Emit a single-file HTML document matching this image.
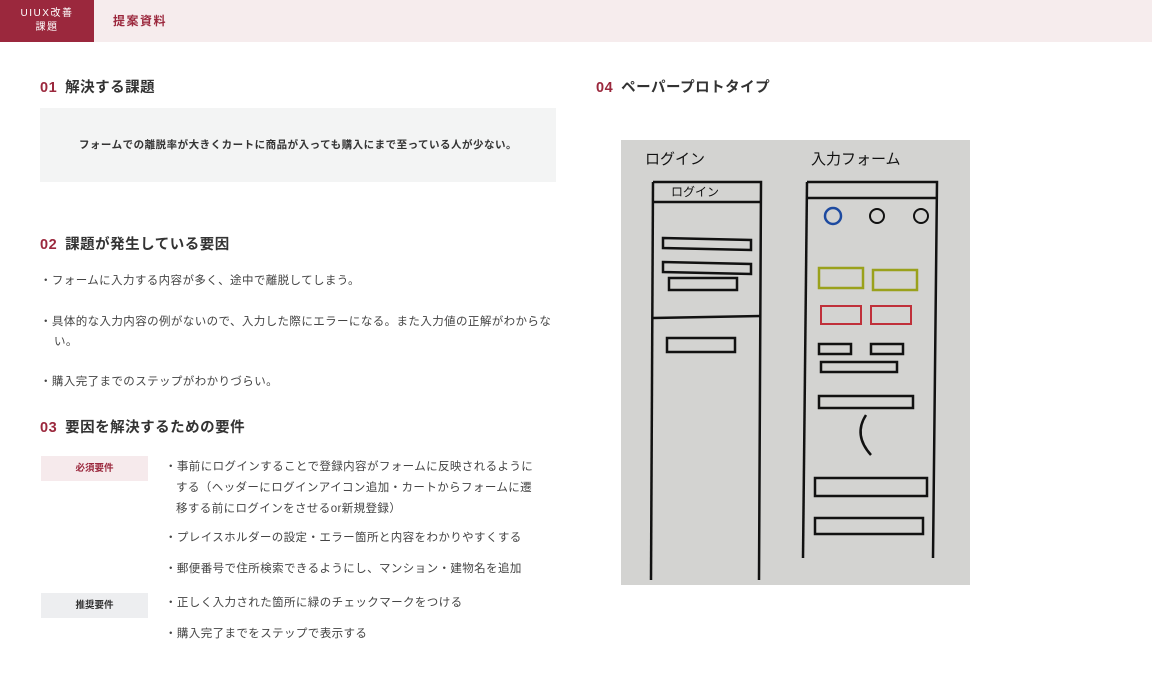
<!DOCTYPE html>
<html><head><meta charset="utf-8"><style>
*{margin:0;padding:0;box-sizing:border-box}
body{width:1152px;height:700px;background:#fff;font-family:"Liberation Sans","Noto Sans CJK JP",sans-serif;color:#333;position:relative;overflow:hidden}
.hd{position:absolute;left:0;top:0;width:1152px;height:42px;background:#f6eced}
.logo{position:absolute;left:0;top:0;width:94px;height:42px;background:#9b283d;color:#fff;font-size:10px;text-align:center;line-height:14px;padding-top:7px;letter-spacing:1.5px}
.ht{position:absolute;left:113px;top:12px;font-size:12px;color:#9b283d;letter-spacing:1.5px;font-weight:bold}
.h2{position:absolute;font-size:14.5px;font-weight:bold;color:#333;letter-spacing:.5px}
.h2 b{color:#9b283d;margin-right:8px}
.p{position:absolute;font-size:11.5px;color:#444;line-height:20px;letter-spacing:.4px}
.box{position:absolute;left:40px;top:108px;width:516px;height:74px;background:#f3f4f4;font-size:10.5px;font-weight:bold;text-align:center;line-height:74px;color:#333;letter-spacing:.5px}
.tag{position:absolute;left:41px;width:107px;height:25px;font-size:9.5px;font-weight:bold;text-align:center;line-height:25px}
</style></head><body>
<div class="hd"></div>
<div class="logo">UIUX改善<br>課題</div>
<div class="ht">提案資料</div>

<div class="h2" style="left:40px;top:76px"><b>01</b>解決する課題</div>
<div class="box">フォームでの離脱率が大きくカートに商品が入っても購入にまで至っている人が少ない。</div>

<div class="h2" style="left:40px;top:233px"><b>02</b>課題が発生している要因</div>
<div class="p" style="left:40px;top:271px">・フォームに入力する内容が多く、途中で離脱してしまう。</div>
<div class="p" style="left:40px;top:312px;width:515px;padding-left:14px;text-indent:-14px">・具体的な入力内容の例がないので、入力した際にエラーになる。また入力値の正解がわからない。</div>
<div class="p" style="left:40px;top:372px">・購入完了までのステップがわかりづらい。</div>

<div class="h2" style="left:40px;top:416px"><b>03</b>要因を解決するための要件</div>
<div class="tag" style="top:456px;background:#f6eaec;color:#9b283d">必須要件</div>
<div class="tag" style="top:593px;background:#edeef0;color:#333">推奨要件</div>
<div class="p" style="left:165px;top:457px;width:376px;padding-left:11px;text-indent:-11px;line-height:21px">・事前にログインすることで登録内容がフォームに反映されるようにする（ヘッダーにログインアイコン追加・カートからフォームに遷移する前にログインをさせるor新規登録）</div>
<div class="p" style="left:165px;top:528px">・プレイスホルダーの設定・エラー箇所と内容をわかりやすくする</div>
<div class="p" style="left:165px;top:559px">・郵便番号で住所検索できるようにし、マンション・建物名を追加</div>
<div class="p" style="left:165px;top:593px">・正しく入力された箇所に緑のチェックマークをつける</div>
<div class="p" style="left:165px;top:624px">・購入完了までをステップで表示する</div>

<div class="h2" style="left:596px;top:76px"><b>04</b>ペーパープロトタイプ</div>
<svg style="position:absolute;left:621px;top:140px" width="349" height="445" viewBox="0 0 349 445">
<rect width="349" height="445" fill="#d3d3d1"/>
<g fill="none" stroke="#111" stroke-width="2.5">
<path d="M32 42 L140 42 L138 440"/><path d="M32 42 L30 440"/>
<path d="M32 62 L140 62"/><path d="M32 178 L140 176"/>
<path d="M42 98 L130 100 L130 110 L42 108Z"/><path d="M42 122 L130 124 L130 134 L42 132Z"/>
<path d="M48 138 L116 138 L116 150 L48 150Z"/><path d="M46 198 L114 198 L114 212 L46 212Z"/>
<path d="M186 42 L316 42 L312 418"/><path d="M186 42 L182 418"/><path d="M186 58 L316 58"/>
<path d="M194 338 L306 338 L306 356 L194 356Z"/><path d="M194 378 L302 378 L302 394 L194 394Z"/>
<path d="M198 204 L230 204 L230 214 L198 214Z"/><path d="M250 204 L282 204 L282 214 L250 214Z"/>
<path d="M200 222 L276 222 L276 232 L200 232Z"/><path d="M198 256 L292 256 L292 268 L198 268Z"/>
<path d="M245 275 Q232 295 250 315"/>
</g>
<g fill="none" stroke="#9aa11c" stroke-width="2.5"><rect x="198" y="128" width="44" height="20"/><rect x="252" y="130" width="44" height="20"/></g>
<g fill="none" stroke="#c0303a" stroke-width="2"><rect x="200" y="166" width="40" height="18"/><rect x="250" y="166" width="40" height="18"/></g>
<circle cx="212" cy="76" r="8" fill="none" stroke="#1d4aa0" stroke-width="2.5"/>
<circle cx="256" cy="76" r="7" fill="none" stroke="#111" stroke-width="2"/><circle cx="300" cy="76" r="7" fill="none" stroke="#111" stroke-width="2"/>
<text x="24" y="24" font-size="15" fill="#111">ログイン</text>
<text x="190" y="24" font-size="15" fill="#111">入力フォーム</text>
<text x="50" y="56" font-size="12" fill="#111">ログイン</text>
</svg>
</body></html>
